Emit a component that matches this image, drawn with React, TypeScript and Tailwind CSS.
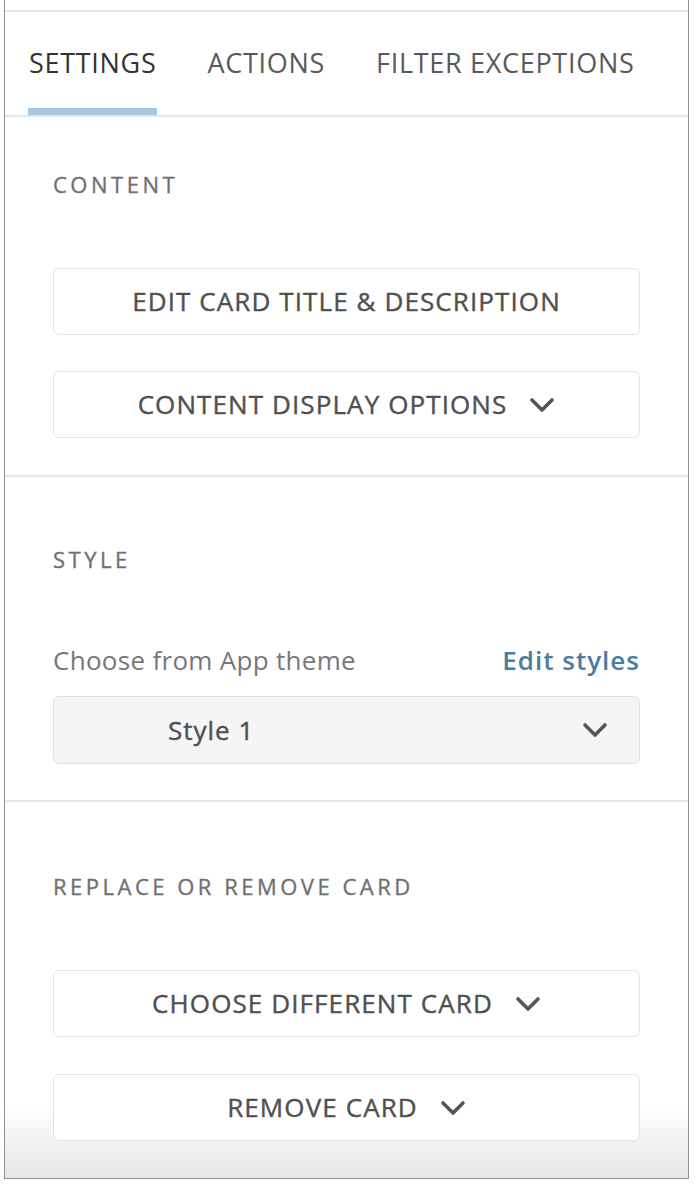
import React from 'react';

const Chevron: React.FC<{ className?: string }> = ({ className }) => (
  <svg viewBox="0 0 26 16" className={className} fill="none" stroke="currentColor" strokeWidth={3.6} strokeLinecap="round" strokeLinejoin="round">
    <polyline points="3,3 13,13 23,3" />
  </svg>
);

const SectionLabel: React.FC<{ children: React.ReactNode }> = ({ children }) => (
  <div className="h-[28px] leading-[28px] text-[22px] tracking-[3.5px] text-[#707070] [-webkit-text-stroke:0.35px_currentColor]">
    {children}
  </div>
);

const OutlineButton: React.FC<{ label: string; chevron?: boolean }> = ({ label, chevron }) => (
  <button className="w-full h-[67px] flex items-center justify-center gap-[22px] rounded-[6px] border-[1.5px] border-[#e3e3e3] bg-white text-[26px] tracking-[1.1px] text-[#505050] [-webkit-text-stroke:0.4px_currentColor]">
    <span>{label}</span>
    {chevron && <Chevron className="w-[26px] h-[16px] text-[#555]" />}
  </button>
);

const tabs = ['SETTINGS', 'ACTIONS', 'FILTER EXCEPTIONS'];

const App: React.FC = () => {
  const activeTab = 0;

  return (
    <div className="min-h-screen bg-white font-['Open_Sans',sans-serif]">
      <div className="ml-[4px] w-[685px] border-x border-b border-[#929292] bg-white">
        <div className="h-[10px]" />
        <div className="h-[2px] bg-[#e2e2e2]" />

        {/* Tabs */}
        <div className="flex gap-[49px] pl-[23px]">
          {tabs.map((tab, i) => (
            <div key={tab} className="flex flex-col">
              <div
                className={`pt-[33px] px-[1px] leading-[36px] text-[27px] tracking-[0.7px] ${
                  i === activeTab ? 'text-[#333]' : 'text-[#595959]'
                }`}
              >
                {tab}
              </div>
              <div className={`mt-[27px] h-[7px] ${i === activeTab ? 'bg-[#a3c8e6]' : 'bg-transparent'}`} />
            </div>
          ))}
        </div>
        <div className="h-[2px] bg-[#e4e4e4]" />

        {/* Content */}
        <div className="px-[48px] pt-[53px] pb-[37px]">
          <SectionLabel>CONTENT</SectionLabel>
          <div className="mt-[70px] flex flex-col gap-[36px]">
            <OutlineButton label="EDIT CARD TITLE & DESCRIPTION" />
            <OutlineButton label="CONTENT DISPLAY OPTIONS" chevron />
          </div>
        </div>
        <div className="h-[2px] bg-[#e8e8e8]" />

        {/* Style */}
        <div className="px-[48px] pt-[68px] pb-[36px]">
          <SectionLabel>STYLE</SectionLabel>
          <div className="mt-[71px] h-[32px] flex items-center justify-between">
            <span className="text-[26px] tracking-[0.3px] text-[#777]">Choose from App theme</span>
            <a className="text-[26px] font-semibold text-[#4b7da0] tracking-[1px]">Edit styles</a>
          </div>
          <div className="mt-[20px] h-[68px] flex items-center rounded-[6px] border-[1.5px] border-[#e0e0e0] bg-[#f5f5f5] pl-[114px] pr-[31px]">
            <span className="flex-1 text-[26px] tracking-[1px] text-[#505050] [-webkit-text-stroke:0.4px_currentColor]">Style 1</span>
            <Chevron className="w-[26px] h-[16px] text-[#555]" />
          </div>
        </div>
        <div className="h-[2px] bg-[#e8e8e8]" />

        {/* Replace or remove */}
        <div className="bg-linear-to-b from-white from-[80%] to-[#e6e6e6]">
          <div className="px-[48px] pt-[70px] pb-[37px]">
            <SectionLabel>REPLACE OR REMOVE CARD</SectionLabel>
            <div className="mt-[70px] flex flex-col gap-[37px]">
              <OutlineButton label="CHOOSE DIFFERENT CARD" chevron />
              <OutlineButton label="REMOVE CARD" chevron />
            </div>
          </div>
        </div>
      </div>
    </div>
  );
};

export default App;
